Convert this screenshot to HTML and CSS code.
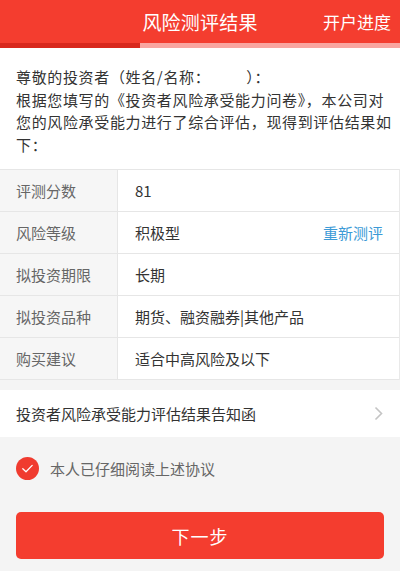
FILE: index.html
```html
<!DOCTYPE html>
<html lang="zh-CN">
<head>
<meta charset="utf-8">
<title>风险测评结果</title>
<link rel="stylesheet" href="styles.css">
</head>
<body>
<div class="page">
  <header class="topbar">
    <div class="title">风险测评结果</div>
    <div class="progress-link">开户进度</div>
  </header>
  <div class="progress"><div class="progress-done"></div></div>

  <section class="intro">
    <p>尊敬的投资者（姓名/名称：<span class="blank"></span>）：</p>
    <p>根据您填写的《投资者风险承受能力问卷》，本公司对<br>您的风险承受能力进行了综合评估，现得到评估结果如<br>下：</p>
  </section>

  <div class="table">
    <div class="row"><div class="label">评测分数</div><div class="value">81</div></div>
    <div class="row"><div class="label">风险等级</div><div class="value">积极型<span class="retest">重新测评</span></div></div>
    <div class="row"><div class="label">拟投资期限</div><div class="value">长期</div></div>
    <div class="row"><div class="label">拟投资品种</div><div class="value">期货、融资融券|其他产品</div></div>
    <div class="row"><div class="label">购买建议</div><div class="value">适合中高风险及以下</div></div>
  </div>

  <div class="notice">
    <span>投资者风险承受能力评估结果告知函</span>
    <svg class="chev" width="9" height="15" viewBox="0 0 9 15"><polyline points="1.5,1.5 7.5,7.5 1.5,13.5" fill="none" stroke="#c4c4c4" stroke-width="1.6"/></svg>
  </div>

  <div class="agree">
    <span class="check"><svg width="23" height="23" viewBox="0 0 23 23"><circle cx="11.5" cy="11.5" r="11.5" fill="#f03b2f"/><polyline points="6.8,11.8 10,14.8 16.2,8.4" fill="none" stroke="#fff" stroke-width="1.3" stroke-linecap="round" stroke-linejoin="round"/></svg></span>
    <span class="agree-text">本人已仔细阅读上述协议</span>
  </div>

  <div class="btn-wrap"><button class="next">下一步</button></div>
</div>
</body>
</html>
```

FILE: styles.css
```css
* { box-sizing: border-box; }
html, body { margin: 0; padding: 0; }
body {
  width: 400px;
  height: 571px;
  overflow: hidden;
  background: #f4f4f4;
  font-family: "Noto Sans CJK SC", "Noto Sans", sans-serif;
  color: #333;
}
.page { display: flex; flex-direction: column; }
.topbar {
  height: 43px;
  background: #f43d2f;
  display: flex;
  align-items: center;
  justify-content: center;
  position: relative;
  color: #fff;
}
.title { font-size: 19px; letter-spacing: 0.2px; }
.progress-link {
  position: absolute;
  right: 9px;
  top: 0;
  height: 43px;
  line-height: 43px;
  font-size: 17px;
}
.progress { height: 5px; background: #f9a5a0; display: flex; }
.progress-done { width: 140px; background: #d8281d; }
.intro {
  background: #fff;
  padding: 18px 10px 13px 16px;
  font-size: 15px;
  line-height: 22.5px;
  letter-spacing: 0.65px;
  color: #333;
  white-space: nowrap;
}
.intro p { margin: 0; }
.blank { display: inline-block; width: 36px; }
.table {
  background: #fff;
  border-top: 1px solid #e6e6e6;
  border-right: 1px solid #e9e9e9;
}
.row {
  display: flex;
  height: 42px;
  border-bottom: 1px solid #e6e6e6;
  font-size: 15px;
}
.label {
  width: 118px;
  background: #f6f6f6;
  border-right: 1px solid #e6e6e6;
  color: #666;
  padding-left: 16px;
  display: flex;
  align-items: center;
}
.value {
  flex: 1;
  display: flex;
  align-items: center;
  padding-left: 17px;
  padding-right: 16px;
  color: #333;
}
.retest { margin-left: auto; color: #3c9ad6; }
.notice {
  margin-top: 10px;
  height: 47px;
  background: #fff;
  display: flex;
  align-items: center;
  justify-content: space-between;
  padding: 0 16px;
  font-size: 15px;
  color: #333;
}
.chev { margin-right: 1px; }
.agree {
  display: flex;
  align-items: center;
  padding: 10px 16px 0;
  height: 43px;
  box-sizing: content-box;
}
.check { display: flex; width: 23px; height: 23px; }
.agree-text { margin-left: 11px; font-size: 15px; color: #666; }
.btn-wrap { padding: 22px 16px 0; }
.next {
  width: 100%;
  height: 47px;
  border: none;
  border-radius: 5px;
  background: #f43d2f;
  color: #fff;
  font-family: "Noto Sans CJK SC", "Noto Sans", sans-serif;
  font-size: 18px;
  letter-spacing: 1px;
}
```
